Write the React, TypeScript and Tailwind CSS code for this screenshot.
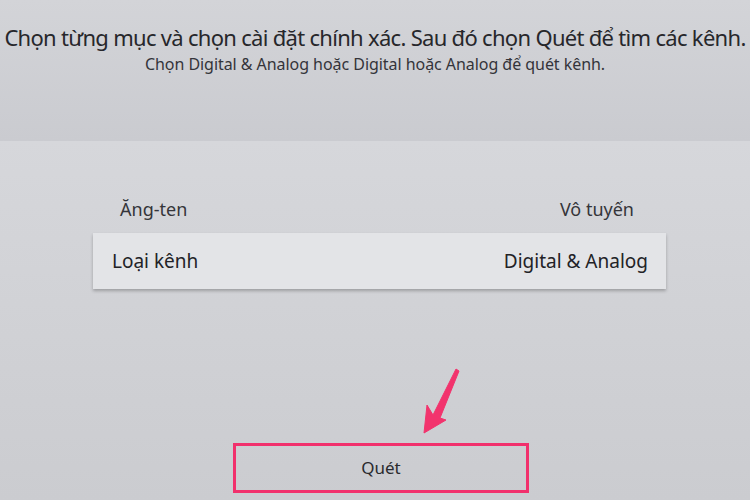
import React from "react";

export default function App() {
  return (
    <div
      className="w-[750px] h-[500px] overflow-hidden flex flex-col relative"
      style={{ fontFamily: '"Noto Sans", Roboto, "Liberation Sans", sans-serif' }}
    >
      <div className="h-[141px] shrink-0 bg-gradient-to-b from-[#d3d4d8] to-[#cacbd0] flex flex-col items-center pt-[22px]">
        <div className="text-[22px] leading-[30px] text-[#27272b] tracking-[-0.7px] whitespace-nowrap">
          Chọn từng mục và chọn cài đặt chính xác. Sau đó chọn Quét để tìm các kênh.
        </div>
        <div className="mt-[1px] text-[16px] leading-[22px] text-[#34343a] tracking-[-0.05px] whitespace-nowrap">
          Chọn Digital &amp; Analog hoặc Digital hoặc Analog để quét kênh.
        </div>
      </div>
      <div className="flex-1 bg-gradient-to-b from-[#d6d7db] to-[#cbccd0] flex flex-col">
        <div className="mt-[44px] mx-[93px] w-[573px] flex flex-col">
          <div className="h-[48px] pl-[27px] pr-[32px] flex items-center justify-between text-[18px] text-[#35353a]">
            <span>Ăng-ten</span>
            <span>Vô tuyến</span>
          </div>
          <div className="h-[56px] pl-[19px] pr-[18px] flex items-center justify-between bg-[#e3e4e7] shadow-[0_2px_3px_rgba(0,0,0,0.25)] text-[19px] text-[#222226]">
            <span>Loại kênh</span>
            <span>Digital &amp; Analog</span>
          </div>
        </div>
        <div className="mt-[154px] ml-[233px] w-[296px] h-[50px] border-[3px] border-[#f1306c] flex items-center justify-center text-[17px] text-[#2a2a2e]">
          Quét
        </div>
      </div>
      <svg
        className="absolute left-[415px] top-[365px]"
        width="50"
        height="75"
        viewBox="0 0 50 75"
      >
        <polygon
          points="41,4 44,6 25,53 31,55 9,68 12,40 18,50"
          fill="#f2336d"
          stroke="#f2336d"
          strokeWidth="1"
          strokeLinejoin="round"
        />
      </svg>
    </div>
  );
}
